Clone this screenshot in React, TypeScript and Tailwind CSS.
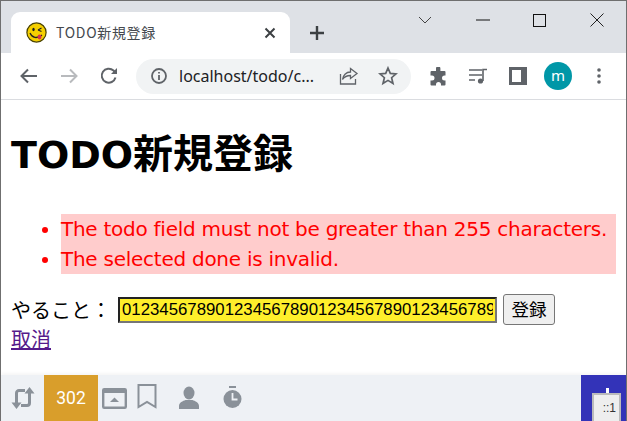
import React from 'react';

const Favicon = () => (
  <svg width="21" height="21" viewBox="0 0 21 21">
    <circle cx="10.5" cy="10.5" r="9.6" fill="#f5cf00" stroke="#4a4200" strokeWidth="1.2" />
    <ellipse cx="7.5" cy="7.5" rx="1.2" ry="1.8" fill="#222" />
    <path d="M12 8l3.5-2M12 8l3.5 1.5" stroke="#222" strokeWidth="1.2" fill="none" />
    <path d="M4 11c2 5 7 6 12 2" stroke="#222" strokeWidth="1.3" fill="none" />
    <ellipse cx="13.5" cy="15" rx="2" ry="2.4" fill="#d8324a" />
  </svg>
);

const Tabstrip = () => (
  <div className="h-[52px] bg-[#dee1e6] flex items-end pl-[10px] shrink-0">
    <div className="w-[279px] h-[41px] bg-white rounded-t-[9px] flex items-center pl-[15px] pr-[14px]">
      <Favicon />
      <span className="ml-[9px] text-[14px] tracking-[0.7px] text-[#45494e] font-['Noto_Sans_CJK_JP',sans-serif] flex-1">TODO新規登録</span>
      <svg width="12" height="12" viewBox="0 0 12 12" stroke="#3c4043" strokeWidth="2">
        <path d="M1.5 1.5l9 9M10.5 1.5l-9 9" />
      </svg>
    </div>
    <div className="w-[54px] h-[41px] flex items-center justify-center">
      <svg width="16" height="16" viewBox="0 0 16 16" stroke="#3c4043" strokeWidth="2.4">
        <path d="M8 1v14M1 8h14" />
      </svg>
    </div>
    <div className="flex-1 self-start flex justify-end h-[38px] items-center">
      <div className="w-[58px] flex justify-center">
        <svg width="14" height="8" viewBox="0 0 14 8" stroke="#444" fill="none"><path d="M1 1l6 6 6-6" /></svg>
      </div>
      <div className="w-[57px] flex justify-center">
        <svg width="14" height="2" viewBox="0 0 14 2" stroke="#111"><path d="M0 1h14" /></svg>
      </div>
      <div className="w-[57px] flex justify-center">
        <svg width="13" height="13" viewBox="0 0 13 13" stroke="#111" fill="none"><rect x=".5" y=".5" width="12" height="12" /></svg>
      </div>
      <div className="w-[58px] flex justify-center">
        <svg width="14" height="14" viewBox="0 0 14 14" stroke="#222" fill="none"><path d="M.5.5l13 13M13.5.5l-13 13" /></svg>
      </div>
    </div>
  </div>
);

const Toolbar = () => (
  <div className="h-[47px] bg-white border-b border-[#dadce0] flex items-center shrink-0">
    <div className="w-[135px] pl-[19px] flex items-center shrink-0">
      <svg width="18" height="16" viewBox="0 0 18 16" fill="none" stroke="#5f6368" strokeWidth="2">
        <path d="M17 8H2M8 1.500L1.500 8 8 14.500" />
      </svg>
      <svg className="ml-[22px]" width="18" height="16" viewBox="0 0 18 16" fill="none" stroke="#b8babd" strokeWidth="2">
        <path d="M1 8h15M10 1.500L16.500 8 10 14.500" />
      </svg>
      <svg className="ml-[22px]" width="18" height="18" viewBox="0 0 18 18" fill="none" stroke="#5f6368" strokeWidth="2">
        <path d="M15.500 10.500A7 7 0 1 1 13.500 3.500L16 6" />
        <path d="M17 1v6h-6z" fill="#5f6368" stroke="none" />
      </svg>
    </div>
    <div className="w-[275px] h-[35px] bg-[#f1f3f4] rounded-full flex items-center pl-[14px] shrink-0">
      <svg width="18" height="18" viewBox="0 0 18 18" fill="none">
        <circle cx="9" cy="9" r="7" stroke="#5f6368" strokeWidth="1.8" />
        <path d="M9 8v5M9 5v1.600" stroke="#5f6368" strokeWidth="1.800" />
      </svg>
      <span className="ml-[11px] text-[16px] text-[#202124] font-['Noto_Sans',sans-serif] w-[144px] whitespace-nowrap">localhost/todo/c...</span>
      <svg className="ml-[16px]" width="20" height="20" viewBox="0 0 20 20" fill="none" stroke="#5f6368" strokeWidth="1.300">
        <path d="M1.500 8v10h15v-5" />
        <path d="M11.500 2.500l6.500 5-6.500 5V9.500c-3.500 0-6 1-8 4 .5-4 3.500-7.500 8-7.500z" />
      </svg>
      <svg className="ml-[19px]" width="20" height="20" viewBox="0 0 20 20" fill="none" stroke="#5f6368" strokeWidth="1.700">
        <path d="M10 2l2.300 5.400 5.700.5-4.400 3.800 1.400 5.800L10 14.400 5 17.500l1.400-5.800L2 7.900l5.700-.5z" />
      </svg>
    </div>
    <div className="flex items-center pl-[18px] flex-1">
      <svg width="19" height="19" viewBox="0 0 19 19" fill="#5f6368">
        <path d="M7 1.500a2.200 2.200 0 0 1 4.400 0V4h4.100a1 1 0 0 1 1 1v3.500h-1a2.500 2.500 0 0 0 0 5h1v4a1 1 0 0 1-1 1H12v-1a2.500 2.500 0 0 0-5 0v1H2.500a1 1 0 0 1-1-1v-4H3a2.500 2.500 0 0 0 0-5H1.500V5a1 1 0 0 1 1-1H7z" />
      </svg>
      <svg className="ml-[20px]" width="20" height="18" viewBox="0 0 20 18" fill="none" stroke="#5f6368" strokeWidth="1.600">
        <path d="M1 3h13M1 8h13M1 13h6M15 14V2.500h4" />
        <circle cx="12.500" cy="14" r="2.600" fill="#5f6368" stroke="none" />
      </svg>
      <svg className="ml-[21px]" width="18" height="18" viewBox="0 0 18 18" fill="none">
        <rect x="1.500" y="1.500" width="15" height="15" stroke="#5f6368" strokeWidth="3" />
        <rect x="12" y="1" width="5" height="16" fill="#5f6368" />
      </svg>
      <div className="ml-[17px] w-[28px] h-[28px] rounded-full bg-[#0097a7] flex items-center justify-center text-white text-[15px] leading-none pb-[2px] font-['Noto_Sans',sans-serif]">m</div>
      <svg className="ml-[25px]" width="4" height="16" viewBox="0 0 4 16" fill="#5f6368">
        <circle cx="2" cy="2" r="1.800" />
        <circle cx="2" cy="8" r="1.800" />
        <circle cx="2" cy="14" r="1.800" />
      </svg>
    </div>
  </div>
);

const DebugBar = () => (
  <div className="relative h-[46px] bg-[#eef1f5] flex items-stretch shrink-0 shadow-[0_-2px_3px_rgba(0,0,0,0.04)]">
    <div className="w-[43px] flex items-center justify-center">
      <svg width="24" height="24" viewBox="0 0 24 24" fill="none" stroke="#8a9199" strokeWidth="3">
        <path d="M5.500 17V7a2.500 2.500 0 0 1 2.500-2.500h6M18.500 7v10a2.500 2.500 0 0 1-2.500 2.500h-6" />
        <path d="M18.500 1l5 6.500h-10zM5.500 23l-5-6.500h10z" fill="#8a9199" stroke="none" />
      </svg>
    </div>
    <div className="w-[54px] bg-[#d99e2b] flex items-center justify-center text-white text-[17.5px] font-['Roboto',sans-serif]">302</div>
    <div className="flex items-center pl-[4px]">
      <svg width="25" height="21" viewBox="0 0 25 21" fill="none">
        <rect x="1.200" y="1.200" width="22.600" height="18.600" rx="1" stroke="#8a9199" strokeWidth="2.400" />
        <path d="M1 3.500h23" stroke="#8a9199" strokeWidth="3" />
        <path d="M12.500 9.500l4.500 4.500H8z" fill="#8a9199" />
      </svg>
      <svg className="ml-[10px] -mt-[3px]" width="20" height="25" viewBox="0 0 20 25" fill="none" stroke="#8a9199" strokeWidth="2">
        <path d="M1.500 1h17v22l-8.500-5-8.500 5z" />
      </svg>
      <svg className="ml-[22px] -mt-[2px]" width="20" height="23" viewBox="0 0 20 23" fill="#8a9199">
        <ellipse cx="10" cy="7" rx="5.500" ry="6.500" />
        <path d="M0 23v-3c0-3.500 4-5 6.500-6h7c2.500 1 6.500 2.500 6.500 6v3z" />
      </svg>
      <svg className="ml-[24px] -mt-[2px]" width="19" height="23" viewBox="0 0 19 23">
        <rect x="6" y="0" width="7" height="2" fill="#8a9199" />
        <circle cx="9.500" cy="13" r="9" fill="#8a9199" />
        <path d="M9.500 7v6.500h5" stroke="#eef1f5" strokeWidth="1.800" fill="none" />
      </svg>
    </div>
    <div className="ml-auto w-[45px] bg-[#3333b8]" />
    <div className="absolute right-[5px] top-[18px] w-[29px] h-[28px] bg-[#eeeeee] border-t-2 border-x-2 border-[#bbbbbb] flex items-center justify-end pr-[3px] text-[12px] text-[#333] font-['Liberation_Sans',sans-serif]">
      ::1
    </div>
    <div className="absolute right-[17px] top-[13px] w-[3px] h-[5px] bg-white" />
  </div>
);

export default function App() {
  return (
    <div className="h-[421px] w-[627px] overflow-hidden flex flex-col border-t border-x border-[#6f6f6f] bg-white">
      <Tabstrip />
      <Toolbar />
      <main className="flex-1 pl-[10px] pr-[10px]">
        <h1 className="mt-[23px] h-[56px] text-[40px] leading-[56px] font-bold text-black font-['Noto_Sans_CJK_JP',sans-serif] whitespace-nowrap">
          <span className="text-[38px] leading-none font-['DejaVu_Sans',sans-serif]">TODO</span>新規登録
        </h1>
        <ul className="mt-[35px] ml-[50px] text-[#ff0000] font-['DejaVu_Sans',sans-serif] text-[20px] leading-[30px] list-disc marker:text-[#ff0000] w-[555px] tracking-[-0.26px]">
          <li className="bg-[#ffcccc] whitespace-nowrap">The todo field must not be greater than 255 characters.</li>
          <li className="bg-[#ffcccc] whitespace-nowrap">The selected done is invalid.</li>
        </ul>
        <form className="mt-[20px] flex items-center h-[31px]">
          <label className="text-[20px] text-black font-['Noto_Sans_CJK_JP',sans-serif] mr-[7px] whitespace-nowrap">やること：</label>
          <input
            readOnly
            value="012345678901234567890123456789012345678901234567890123456789"
            className="w-[379px] h-[26px] bg-[#ffef2b] border-2 border-t-[#222222] border-l-[#222222] border-r-[#767676] border-b-[#767676] px-[2px] text-[16.8px] text-black font-['Liberation_Sans',sans-serif] outline-none"
          />
          <button type="button" className="ml-[6px] w-[52px] h-[31px] bg-[#efefef] border border-[#767676] rounded-[3px] text-[17.5px] text-black font-['Noto_Sans_CJK_JP',sans-serif]">登録</button>
        </form>
        <a href="#" className="block text-[20px] leading-[28px] text-[#551a8b] underline font-['Noto_Sans_CJK_JP',sans-serif] w-fit">取消</a>
      </main>
      <DebugBar />
    </div>
  );
}
